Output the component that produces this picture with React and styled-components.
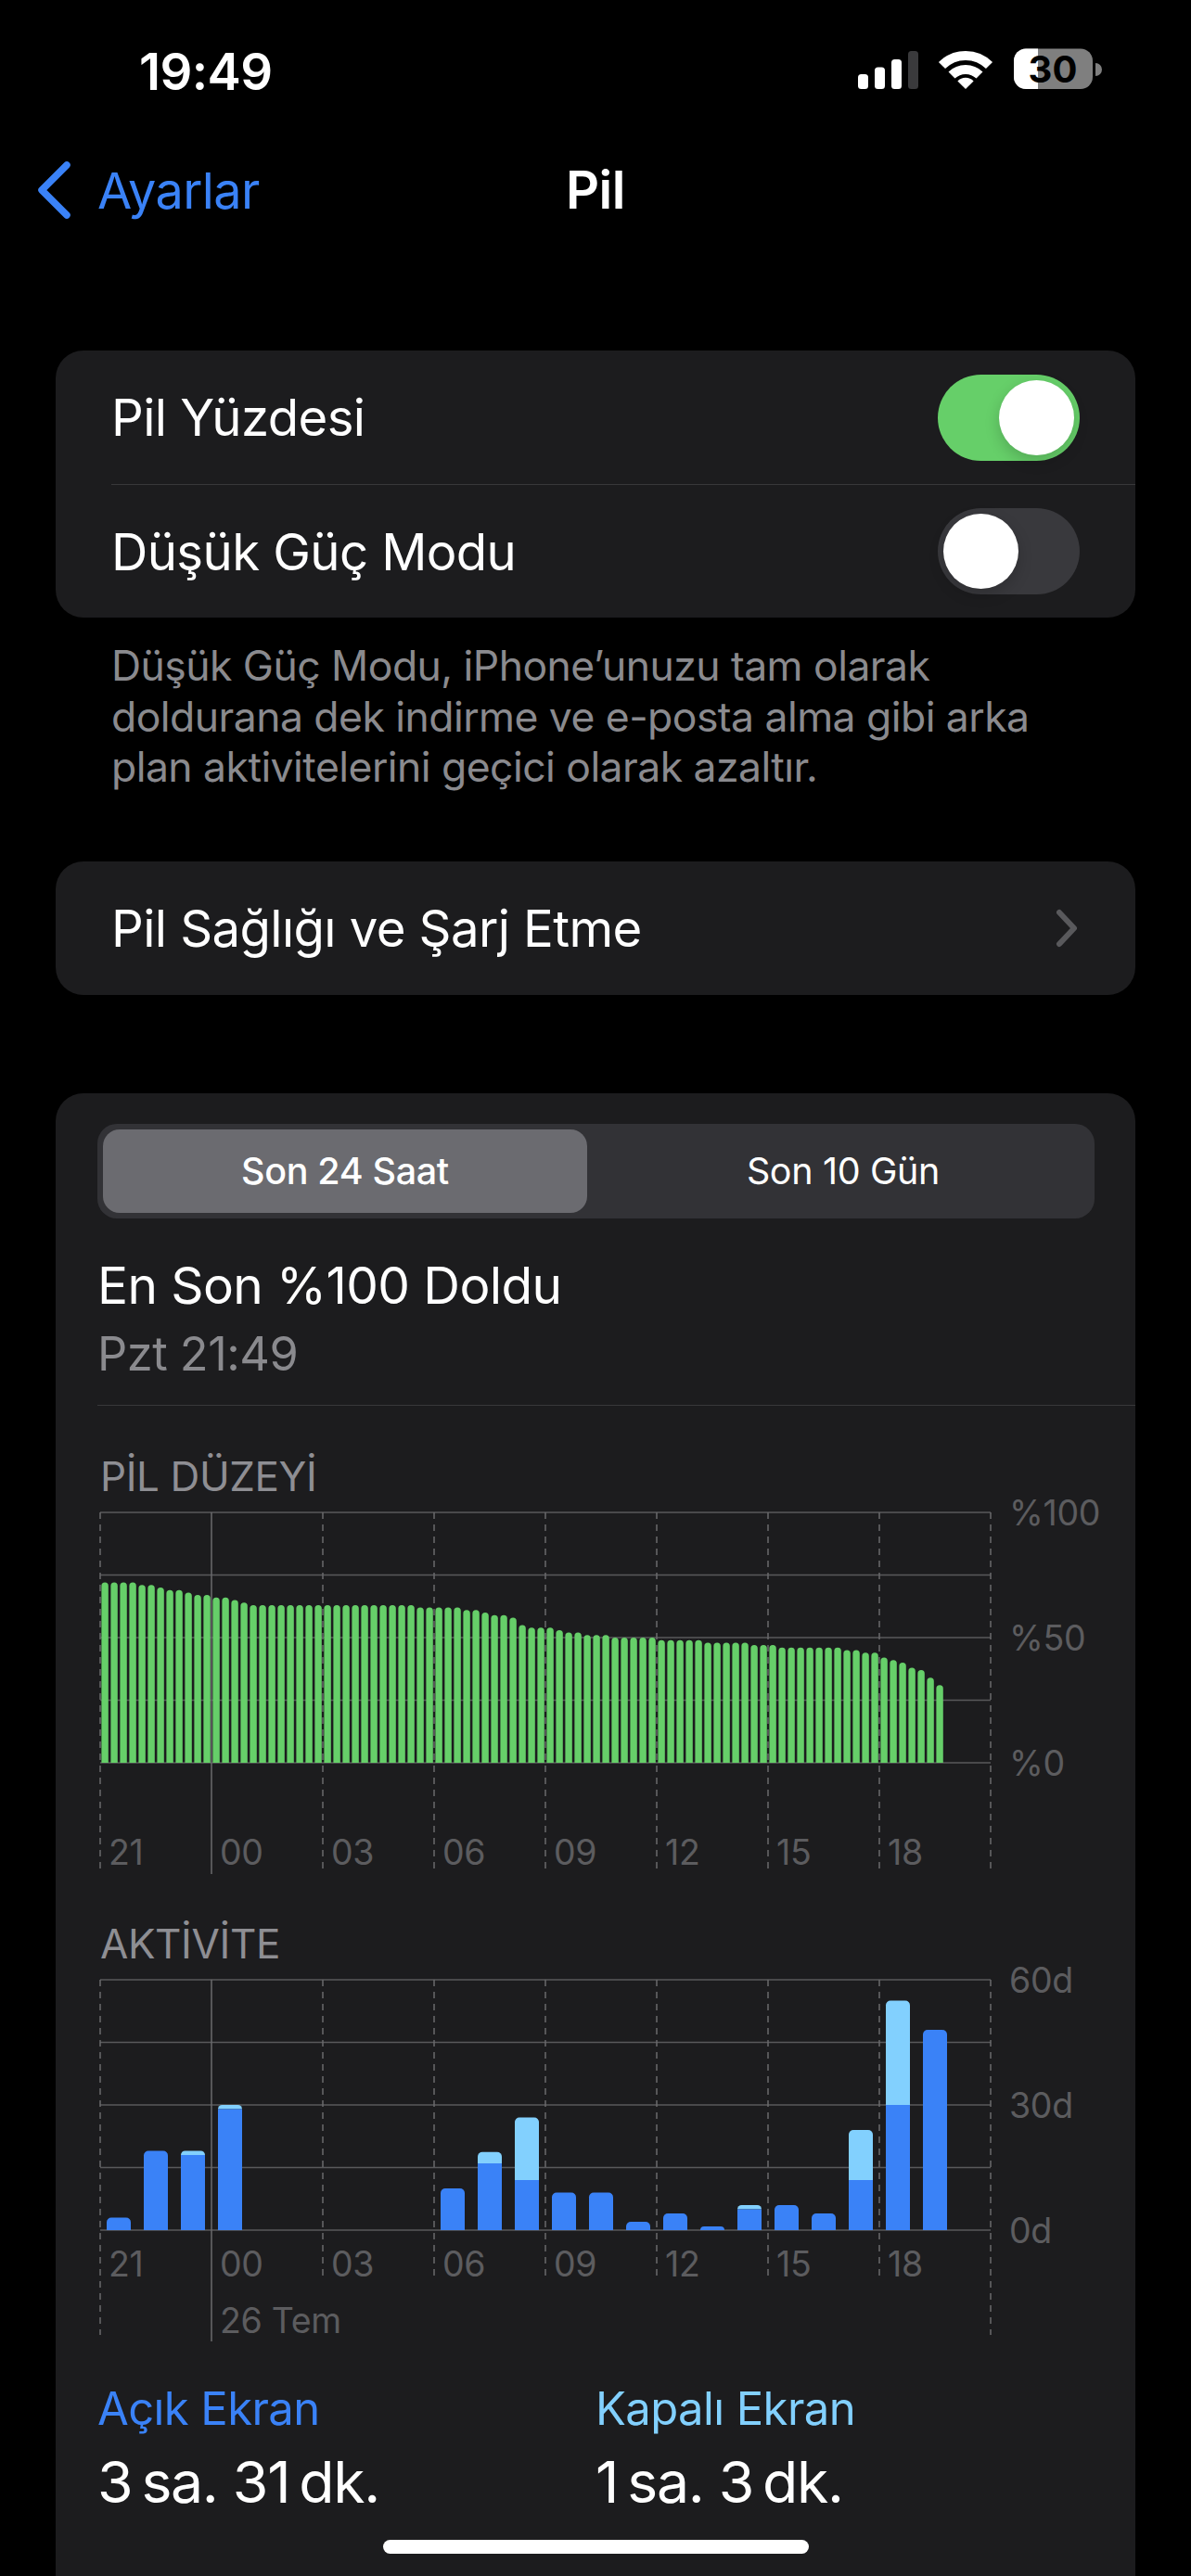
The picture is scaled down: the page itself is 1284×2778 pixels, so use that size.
import styled, { createGlobalStyle } from "styled-components";

const FONT = `"Inter", "Roboto", "Liberation Sans", sans-serif`;

const GlobalStyle = createGlobalStyle`
  html, body {
    margin: 0;
    padding: 0;
    background: #000;
  }
`;

const Screen = styled.div`
  position: relative;
  width: 1284px;
  height: 2778px;
  overflow: hidden;
  background: #000;
  color: #fff;
  font-family: ${FONT};
`;

const StatusBar = styled.div`
  height: 132px;
  display: flex;
  justify-content: space-between;
  padding: 45px 95px 0 150px;
  box-sizing: border-box;
`;

const Time = styled.div`
  font-size: 54.5px;
  line-height: 64px;
  font-weight: 600;
  letter-spacing: -0.6px;
`;

const NavBar = styled.div`
  height: 146px;
  display: grid;
  grid-template-columns: 1fr auto 1fr;
  align-items: center;
`;

const BackLink = styled.div`
  display: flex;
  align-items: center;
  gap: 27px;
  padding-left: 39px;
  font-size: 54px;
  color: #3a82f7;
  letter-spacing: -0.6px;
`;

const NavTitle = styled.div`
  font-size: 56px;
  font-weight: 600;
  letter-spacing: -0.4px;
`;

const Card = styled.div`
  margin: 0 60px;
  background: #1c1c1e;
  border-radius: 30px;
`;

const FirstCard = styled(Card)`
  margin-top: 100px;
`;

const Row = styled.div`
  height: 144px;
  box-sizing: border-box;
  margin-left: 60px;
  padding-right: 60px;
  display: flex;
  align-items: center;
  justify-content: space-between;
  font-size: 54.5px;
  letter-spacing: -0.6px;
  border-top: ${(p) => (p.$divided ? "1.5px solid #38383a" : "none")};
`;

const Toggle = styled.div`
  width: 153px;
  height: 93px;
  box-sizing: border-box;
  padding: 6px;
  border-radius: 47px;
  display: flex;
  justify-content: ${(p) => (p.$on ? "flex-end" : "flex-start")};
  background: ${(p) => (p.$on ? "#66cf69" : "#39393d")};
`;

const Knob = styled.div`
  width: 81px;
  height: 81px;
  border-radius: 50%;
  background: #fff;
  box-shadow: 0 6px 16px rgba(0, 0, 0, 0.18);
`;

const Footnote = styled.p`
  margin: 25px 60px 74px 120px;
  font-size: 44.5px;
  line-height: 54.6px;
  letter-spacing: -0.55px;
  color: #8a8a8e;
`;

const StatsCard = styled(Card)`
  margin-top: 106px;
  padding-top: 33px;
  height: 1700px;
`;

const Segments = styled.div`
  margin: 0 44px 0 45px;
  height: 102px;
  box-sizing: border-box;
  padding: 6px;
  display: grid;
  grid-template-columns: 522px 1fr;
  background: #323236;
  border-radius: 21px;
`;

const Segment = styled.div`
  display: flex;
  align-items: center;
  justify-content: center;
  font-size: 39.5px;
  letter-spacing: -0.35px;
  font-weight: ${(p) => (p.$active ? 500 : 400)};
  padding-left: ${(p) => (p.$active ? 0 : 11)}px;
  border-radius: 18px;
  background: ${(p) => (p.$active ? "#6b6b70" : "transparent")};
`;

const LastCharge = styled.div`
  padding-top: 35px;
  height: 202px;
  box-sizing: border-box;
  margin-left: 45px;
  border-bottom: 1.5px solid #38383a;
`;

const ChargeTitle = styled.div`
  font-size: 55px;
  line-height: 75px;
  letter-spacing: -0.6px;
`;

const ChargeDate = styled.div`
  font-size: 50.5px;
  line-height: 72px;
  letter-spacing: -0.5px;
  color: #8a8a8e;
`;

const ChartTitle = styled.div`
  padding: ${(p) => p.$top}px 0 7px 48px;
  font-size: 44px;
  line-height: 44px;
  letter-spacing: -0.4px;
  color: #8e8e93;
`;

const ChartSvg = styled.svg`
  display: block;
  margin-left: 46px;
  overflow: visible;
`;

const AxisText = styled.text`
  font-family: ${FONT};
  font-size: 37.5px;
  letter-spacing: -0.3px;
  fill: #5c5c5f;
`;

const Stats = styled.div`
  margin-top: 38px;
  padding-left: 45px;
  display: grid;
  grid-template-columns: 537px 1fr;
`;

const StatLabel = styled.div`
  font-size: 49px;
  line-height: 60px;
  letter-spacing: -0.6px;
  color: ${(p) => p.$color};
`;

const StatValue = styled.div`
  margin-top: 10px;
  font-size: 62.5px;
  line-height: 76px;
  letter-spacing: -1.3px;
`;

const HomeIndicator = styled.div`
  position: absolute;
  left: 413px;
  top: 2739px;
  width: 459px;
  height: 15px;
  border-radius: 8px;
  background: #fff;
`;

const StatusIcons = styled.svg`
  display: block;
  margin-top: 5px;
`;

const BatteryText = styled.text`
  font-family: ${FONT};
  font-size: 40px;
  font-weight: 700;
  fill: #000;
`;

// battery level in percent, one bar per 15 minutes
const LEVELS = [
  72, 72, 72, 72, 71, 71, 70, 69, 69, 68, 67, 67, 66, 66, 65, 64,
  63, 63, 63, 63, 63, 63, 63, 63, 63, 63, 63, 63, 63, 63, 63, 63, 63, 63,
  62, 62, 62, 62, 62, 61, 61, 60, 59, 59, 58, 55, 54, 54, 54, 53, 52, 52,
  51, 51, 51, 50, 50, 50, 50, 50, 49, 49, 49, 49, 49, 48, 48, 48, 48, 48,
  47, 47, 47, 46, 46, 46, 46, 46, 46, 46, 45, 45, 44, 44, 42, 41, 40, 38,
  37, 34, 31,
];

// on / off screen minutes per hour, by slot
const ACTIVITY = [
  [0, 3, 0], [1, 19, 0], [2, 18, 1], [3, 29, 1],
  [9, 10, 0], [10, 16, 2.7], [11, 12, 15], [12, 9, 0], [13, 9, 0],
  [14, 2, 0], [15, 4, 0], [16, 0.9, 0], [17, 5, 1], [18, 6, 0],
  [19, 4, 0], [20, 12, 12], [21, 30, 25], [22, 48, 0],
];

const HOURS = ["21", "00", "03", "06", "09", "12", "15", "18"];
const BLUE = "#3a82f7";
const SKY = "#82d0fe";
const LINE = "#59595b";
const ORIGIN = 2;

const topRounded = (x, y, w, h, r) => {
  const rr = Math.min(r, h, w / 2);
  return `M${x} ${y + h}V${y + rr}A${rr} ${rr} 0 0 1 ${x + rr} ${y}H${x + w - rr}A${rr} ${rr} 0 0 1 ${x + w} ${y + rr}V${y + h}Z`;
};

const Grid = ({ top, dashEnd, solidEnd, shortEnd, labels, labelY }) => (
  <>
    {[0, 1, 2, 3, 4].map((i) => {
      const y = top + i * 67.5;
      return <line key={i} x1={ORIGIN} x2={ORIGIN + 960} y1={y} y2={y} stroke={LINE} strokeWidth="1.5" />;
    })}
    {[0, 1, 2, 3, 4, 5, 6, 7, 8].map((i) => {
      const x = ORIGIN + i * 120;
      if (i === 1) return <line key={i} x1={x} x2={x} y1={top} y2={solidEnd} stroke="#6a6a6c" strokeWidth="1.5" />;
      const end = i === 0 || i === 8 ? dashEnd : shortEnd;
      return <line key={i} x1={x} x2={x} y1={top} y2={end} stroke="#6a6a6c" strokeWidth="1.5" strokeDasharray="7 6" />;
    })}
    {HOURS.map((h, i) => (
      <AxisText key={h} x={ORIGIN + 9 + i * 120} y={labelY}>{h}</AxisText>
    ))}
    {labels.map((l, i) => (
      <AxisText key={l} x={ORIGIN + 980} y={top + 14 + i * 135}>{l}</AxisText>
    ))}
  </>
);

const LevelChart = () => {
  const base = 10 + 270;
  return (
    <ChartSvg width="1120" height="405" viewBox="0 0 1120 405">
      <Grid top={10} dashEnd={395} solidEnd={400} shortEnd={395} labels={["%100", "%50", "%0"]} labelY={390} />
      {LEVELS.map((v, i) => {
        const h = v * 2.7;
        return <path key={i} d={topRounded(3.4 + i * 10, base - h, 7.4, h, 3.7)} fill="#66cf69" />;
      })}
    </ChartSvg>
  );
};

const ActivityChart = () => {
  const base = 10 + 270;
  const perMin = 4.5;
  return (
    <ChartSvg width="1120" height="405" viewBox="0 0 1120 405">
      <Grid top={10} dashEnd={393} solidEnd={400} shortEnd={333} labels={["60d", "30d", "0d"]} labelY={330} />
      <AxisText x={ORIGIN + 129} y={391}>26 Tem</AxisText>
      {ACTIVITY.map(([slot, on, off]) => {
        const x = 9 + slot * 40;
        const onH = on * perMin;
        const offH = off * perMin;
        return (
          <g key={slot}>
            {off > 0 && <path d={topRounded(x, base - onH - offH, 26, offH, 5)} fill={SKY} />}
            <path d={off > 0 ? `M${x} ${base - onH}h26v${onH}h-26Z` : topRounded(x, base - onH, 26, onH, 5)} fill={BLUE} />
          </g>
        );
      })}
    </ChartSvg>
  );
};

const StatusGlyphs = () => (
  <StatusIcons width="264" height="48" viewBox="0 0 264 48">
    {/* signal */}
    <rect x="0" y="30" width="11" height="16" rx="3.5" fill="#fff" />
    <rect x="18" y="22.5" width="11" height="23.5" rx="3.5" fill="#fff" />
    <rect x="36" y="14" width="11" height="32" rx="3.5" fill="#fff" />
    <rect x="54" y="5" width="11" height="41" rx="3.5" fill="#3a3a3c" />
    {/* wifi */}
    <g transform="translate(116 46)" fill="none" stroke="#fff" strokeWidth="10">
      <path d="M-25.5 -25.5A36 36 0 0 1 25.5 -25.5" />
      <path d="M-15 -15A21.5 21.5 0 0 1 15 -15" />
      <path d="M0 0L-8.6 -8.6A12.2 12.2 0 0 1 8.6 -8.6Z" fill="#fff" stroke="none" />
    </g>
    {/* battery */}
    <rect x="168" y="2.5" width="85" height="43.5" rx="13" fill="#7f7f7f" />
    <path d="M181 2.5H194V46H181A13 13 0 0 1 168 33V15.5A13 13 0 0 1 181 2.5Z" fill="#fff" />
    <path d="M256 18A7 7 0 0 1 256 32Z" fill="#7f7f7f" />
    <BatteryText x="210" y="39" textAnchor="middle">30</BatteryText>
  </StatusIcons>
);

const App = () => (
  <Screen>
    <GlobalStyle />
    <StatusBar>
      <Time>19:49</Time>
      <StatusGlyphs />
    </StatusBar>
    <NavBar>
      <BackLink>
        <svg width="39" height="64" viewBox="0 0 39 64" fill="none">
          <path d="M33 5L6 32L33 59" stroke="#3a82f7" strokeWidth="7.5" strokeLinecap="round" strokeLinejoin="round" />
        </svg>
        Ayarlar
      </BackLink>
      <NavTitle>Pil</NavTitle>
      <div />
    </NavBar>

    <FirstCard>
      <Row>
        Pil Yüzdesi
        <Toggle $on><Knob /></Toggle>
      </Row>
      <Row $divided>
        Düşük Güç Modu
        <Toggle><Knob /></Toggle>
      </Row>
    </FirstCard>
    <Footnote>
      Düşük Güç Modu, iPhone’unuzu tam olarak
      <br />
      doldurana dek indirme ve e-posta alma gibi arka
      <br />
      plan aktivitelerini geçici olarak azaltır.
    </Footnote>

    <Card>
      <Row>
        Pil Sağlığı ve Şarj Etme
        <svg width="26" height="42" viewBox="0 0 26 42" fill="none">
          <path d="M4 4L20 21L4 38" stroke="#59595c" strokeWidth="6" strokeLinecap="round" strokeLinejoin="round" />
        </svg>
      </Row>
    </Card>

    <StatsCard>
      <Segments>
        <Segment $active>Son 24 Saat</Segment>
        <Segment>Son 10 Gün</Segment>
      </Segments>
      <LastCharge>
        <ChargeTitle>En Son %100 Doldu</ChargeTitle>
        <ChargeDate>Pzt 21:49</ChargeDate>
      </LastCharge>
      <ChartTitle $top={54}>PİL DÜZEYİ</ChartTitle>
      <LevelChart />
      <ChartTitle $top={48}>AKTİVİTE</ChartTitle>
      <ActivityChart />
      <Stats>
        <div>
          <StatLabel $color={BLUE}>Açık Ekran</StatLabel>
          <StatValue>3{"\u2009"}sa. 31{"\u2009"}dk.</StatValue>
        </div>
        <div>
          <StatLabel $color={SKY}>Kapalı Ekran</StatLabel>
          <StatValue>1{"\u2009"}sa. 3{"\u2009"}dk.</StatValue>
        </div>
      </Stats>
    </StatsCard>
    <HomeIndicator />
  </Screen>
);

export default App;
